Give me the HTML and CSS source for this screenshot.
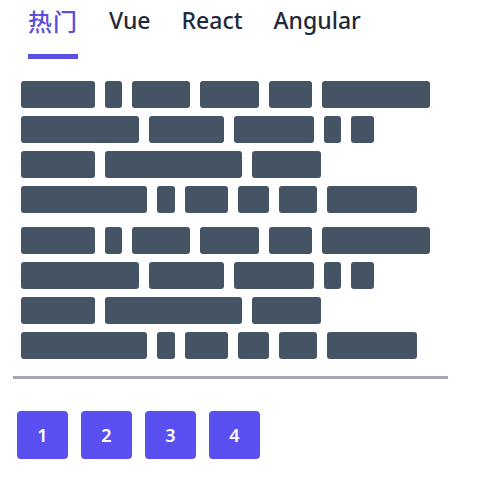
FILE: index.html
```html
<!DOCTYPE html>
<html lang="zh">
<head>
<meta charset="utf-8">
<link rel="stylesheet" href="styles.css">
</head>
<body>
<nav class="tabs">
  <div class="tab active"><span class="cjk">热门</span></div>
  <div class="tab">Vue</div>
  <div class="tab">React</div>
  <div class="tab">Angular</div>
</nav>
<section class="skeleton">
  <div class="group">
    <div class="row"><i class="b" style="width:74px"></i><i class="b" style="width:17px"></i><i class="b" style="width:58px"></i><i class="b" style="width:59px"></i><i class="b" style="width:43px"></i><i class="b" style="width:108px"></i></div>
    <div class="row"><i class="b" style="width:118px"></i><i class="b" style="width:75px"></i><i class="b" style="width:80px"></i><i class="b" style="width:17px"></i><i class="b" style="width:23px"></i></div>
    <div class="row"><i class="b" style="width:74px"></i><i class="b" style="width:137px"></i><i class="b" style="width:69px"></i></div>
    <div class="row"><i class="b" style="width:126px"></i><i class="b" style="width:18px"></i><i class="b" style="width:43px"></i><i class="b" style="width:31px"></i><i class="b" style="width:38px"></i><i class="b" style="width:90px"></i></div>
  </div>
  <div class="group">
    <div class="row"><i class="b" style="width:74px"></i><i class="b" style="width:17px"></i><i class="b" style="width:58px"></i><i class="b" style="width:59px"></i><i class="b" style="width:43px"></i><i class="b" style="width:108px"></i></div>
    <div class="row"><i class="b" style="width:118px"></i><i class="b" style="width:75px"></i><i class="b" style="width:80px"></i><i class="b" style="width:17px"></i><i class="b" style="width:23px"></i></div>
    <div class="row"><i class="b" style="width:74px"></i><i class="b" style="width:137px"></i><i class="b" style="width:69px"></i></div>
    <div class="row"><i class="b" style="width:126px"></i><i class="b" style="width:18px"></i><i class="b" style="width:43px"></i><i class="b" style="width:31px"></i><i class="b" style="width:38px"></i><i class="b" style="width:90px"></i></div>
  </div>
</section>
<hr class="divider">
<div class="pager">
  <button class="page">1</button>
  <button class="page">2</button>
  <button class="page">3</button>
  <button class="page">4</button>
</div>
</body>
</html>
```
FILE: styles.css
```css
html, body {
  margin: 0;
  padding: 0;
  background: #ffffff;
}
body {
  font-family: "Noto Sans", "Noto Sans CJK SC", sans-serif;
  width: 502px;
  height: 477px;
  overflow: hidden;
}
.tabs {
  display: flex;
  gap: 31px;
  padding: 5px 0 0 28px;
}
.tab {
  position: relative;
  font-size: 23px;
  line-height: 31px;
  font-weight: 500;
  color: #1e293b;
  padding-bottom: 21px;
}
.tab .cjk {
  font-family: "Noto Sans CJK SC", sans-serif;
  font-size: 24px;
  letter-spacing: 1px;
}
.tab.active {
  color: #5b50dc;
}
.tab.active::after {
  content: "";
  position: absolute;
  left: 0;
  right: 0;
  bottom: 0;
  height: 5px;
  background: #5b50e6;
}
.skeleton {
  display: flex;
  flex-direction: column;
  gap: 14px;
  padding: 22px 0 0 21px;
}
.group {
  display: flex;
  flex-direction: column;
  gap: 8px;
}
.row {
  display: flex;
  gap: 10px;
}
.b {
  display: block;
  height: 27px;
  background: #455464;
  border-radius: 3px;
}
.divider {
  margin: 17px 0 0 13px;
  width: 435px;
  height: 3px;
  border: 0;
  background: #a4a9b4;
}
.pager {
  display: flex;
  gap: 13px;
  padding: 32px 0 0 17px;
}
.page {
  width: 51px;
  height: 48px;
  border: 0;
  border-radius: 4px;
  background: #5a50f2;
  color: #ffffff;
  font-family: "Noto Sans", sans-serif;
  font-size: 18px;
  font-weight: 600;
  padding: 0;
}
```
